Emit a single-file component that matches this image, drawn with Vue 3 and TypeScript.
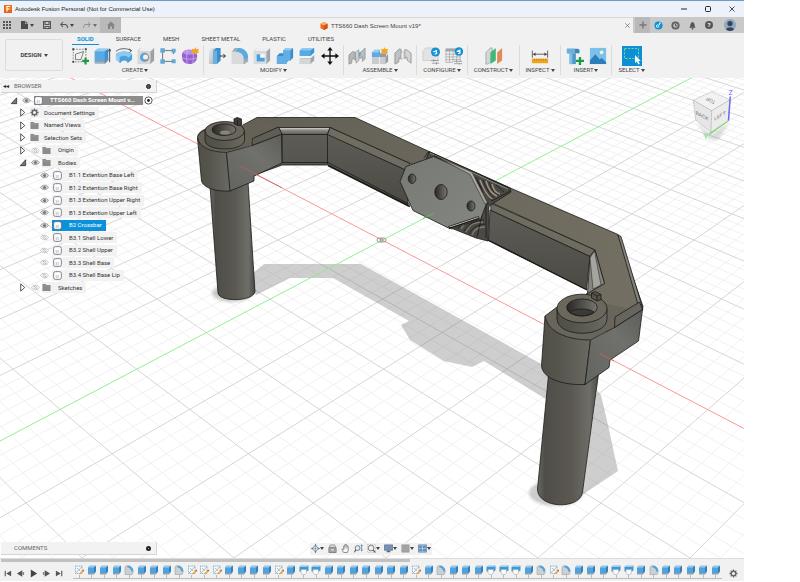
<script setup lang="ts">
import { ref } from 'vue'

interface ToolGroup {
  label: string
  width: number
  tools: { icon: string; name: string }[]
}

interface TreeNode {
  label: string
  level: number
  icon: 'gear' | 'folder' | 'body'
  eye?: 'on' | 'off'
  arrow?: 'open' | 'closed'
}

interface GridLine {
  x1: number
  y1: number
  x2: number
  y2: number
}

const tabs = ['SOLID', 'SURFACE', 'MESH', 'SHEET METAL', 'PLASTIC', 'UTILITIES']
const activeTab = ref('SOLID')

const tool = (icon: string, name: string) => ({ icon, name })

const groups: ToolGroup[] = [
  {
    label: 'CREATE',
    width: 137,
    tools: [
      tool('new-sketch', 'Create sketch'),
      tool('extrude', 'Extrude'),
      tool('revolve', 'Revolve'),
      tool('hole', 'Hole'),
      tool('pattern', 'Rectangular pattern'),
      tool('form', 'Create form'),
    ],
  },
  {
    label: 'MODIFY',
    width: 140,
    tools: [
      tool('press-pull', 'Press pull'),
      tool('fillet', 'Fillet'),
      tool('shell', 'Shell'),
      tool('combine', 'Combine'),
      tool('split', 'Split body'),
      tool('move', 'Move'),
    ],
  },
  {
    label: 'ASSEMBLE',
    width: 73,
    tools: [tool('joint', 'Joint'), tool('component', 'New component'), tool('as-built', 'As-built joint')],
  },
  { label: 'CONFIGURE', width: 51, tools: [tool('config', 'Configure'), tool('config-table', 'Configuration table')] },
  { label: 'CONSTRUCT', width: 52, tools: [tool('plane', 'Offset plane')] },
  { label: 'INSPECT', width: 41, tools: [tool('measure', 'Measure')] },
  { label: 'INSERT', width: 51, tools: [tool('insert', 'Insert fastener'), tool('canvas', 'Insert canvas')] },
  { label: 'SELECT', width: 39, tools: [tool('select', 'Select')] },
]

const nodes: TreeNode[] = [
  { label: 'Document Settings', level: 1, icon: 'gear', arrow: 'closed' },
  { label: 'Named Views', level: 1, icon: 'folder', arrow: 'closed' },
  { label: 'Selection Sets', level: 1, icon: 'folder', arrow: 'closed' },
  { label: 'Origin', level: 1, icon: 'folder', arrow: 'closed', eye: 'off' },
  { label: 'Bodies', level: 1, icon: 'folder', arrow: 'open', eye: 'on' },
  { label: 'B1.1 Extention Base Left', level: 2, icon: 'body', eye: 'on' },
  { label: 'B1.2 Extention Base Right', level: 2, icon: 'body', eye: 'on' },
  { label: 'B1.3 Extention Upper Right', level: 2, icon: 'body', eye: 'on' },
  { label: 'B1.3 Extention Upper Left', level: 2, icon: 'body', eye: 'on' },
  { label: 'B2 Crossbar', level: 2, icon: 'body', eye: 'on' },
  { label: 'B3.1 Shell Lower', level: 2, icon: 'body', eye: 'off' },
  { label: 'B3.2 Shell Upper', level: 2, icon: 'body', eye: 'off' },
  { label: 'B3.3 Shell Base', level: 2, icon: 'body', eye: 'off' },
  { label: 'B3.4 Shell Base Lip', level: 2, icon: 'body', eye: 'off' },
  { label: 'Sketches', level: 1, icon: 'folder', arrow: 'closed', eye: 'off' },
]
const selected = ref('B2 Crossbar')

/* Feature history: s = sketch, b = extrude, f = fillet, c = cut */
const featureIcons: Record<string, string> = { s: 'tl-sketch', b: 'tl-extrude', f: 'tl-fillet', c: 'tl-cut' }
const features = 'sbbbfbbbfsssbbbbsbccbbbbbbbsbfbbbcccbfsfbbbccbfbbbbb'.split('')

const navTools = [
  { icon: 'nav-orbit', name: 'Orbit', menu: true },
  { icon: 'nav-look', name: 'Look at', menu: false },
  { icon: 'nav-pan', name: 'Pan', menu: false },
  { icon: 'nav-zoom', name: 'Zoom', menu: false },
  { icon: 'nav-fit', name: 'Fit', menu: true },
  { icon: 'nav-display', name: 'Display settings', menu: true },
  { icon: 'nav-grid', name: 'Grid and snaps', menu: true },
  { icon: 'nav-views', name: 'Viewports', menu: true },
]

const playback = [
  { icon: 'pb-first', name: 'Go to start' },
  { icon: 'pb-prev', name: 'Step back' },
  { icon: 'pb-play', name: 'Play' },
  { icon: 'pb-next', name: 'Step forward' },
  { icon: 'pb-last', name: 'Go to end' },
]

/* Projects a point of the ground plane (u along red, v along green) to the view. */
function project(u: number, v: number): [number, number] {
  const d = u + v
  const e = u - v
  const w = 1 - 0.0395 * d
  return [(382 - 14.75 * d + 52 * e) / w, (240 + 17.7 * d) / w]
}

function gridLines(major: boolean): GridLine[] {
  const lines: GridLine[] = []
  const far = -18
  for (let i = -90; i <= 70; i++) {
    if ((i % 5 === 0) !== major || i === 0) continue
    const k = i / 5
    const near = Math.min(16, 20 - k)
    const [ax, ay] = project(k, far)
    const [bx, by] = project(k, near)
    const [cx, cy] = project(far, k)
    const [dx, dy] = project(near, k)
    lines.push({ x1: ax, y1: ay, x2: bx, y2: by }, { x1: cx, y1: cy, x2: dx, y2: dy })
  }
  return lines
}
const minorGrid = gridLines(false)
const majorGrid = gridLines(true)
</script>

<template>
  <svg class="sprite" aria-hidden="true">
    <defs>
      <linearGradient id="g-grey" x1="0" y1="0" x2="1" y2="1">
        <stop offset="0" stop-color="#ececec" /><stop offset="1" stop-color="#a9adb1" />
      </linearGradient>
    </defs>

    <symbol id="new-sketch" viewBox="0 0 20 20">
      <rect x="2.500" y="2.500" width="14" height="14" fill="none" stroke="#666" stroke-width=".8" stroke-dasharray="2 1.200" />
      <path d="M5 14V8M5 14h6l3-9M5 8l6-2 3-1" fill="none" stroke="#555" stroke-width=".8" />
      <path d="M1.500 1.500h2v2h-2zM15.500 1.500h2v2h-2zM1.500 15.500h2v2h-2z" fill="#444" />
      <path d="M12.500 15.500h7.500M16.200 12v7.500" stroke="#1d9d43" stroke-width="2.400" />
    </symbol>
    <symbol id="extrude" viewBox="0 0 20 20">
      <path d="M2 5 5 2h12v12l-3 4H2z" fill="#3c92d2" />
      <path d="M2 5h11v11H2z" fill="#5aaae1" /><path d="M2 5 5 2h12l-4 3z" fill="#8fcdf3" />
      <path d="M2 16h11v2.500H2z" fill="#aab0b5" />
      <path d="M13 16 17 12v3l-4 3.500z" fill="#888" />
      <path d="M18.500 17V3M17 5l1.500-3L20 5" fill="none" stroke="#333" stroke-width=".9" />
    </symbol>
    <symbol id="revolve" viewBox="0 0 20 20">
      <path d="M1 8c3-4 15-4 18 0v6l-5 4c0-4-7-4-8 0l-5-4z" fill="#4e9fda" />
      <path d="M1 8c3-4 15-4 18 0l-4 4c-2-3-8-3-10 0z" fill="#8cc9f0" />
      <path d="M5 12v6l-4-4V8z" fill="#9bd0f2" />
      <path d="M1 5c4-4 12-4 17-1M15.500 2 18.500 4 16 6" fill="none" stroke="#444" stroke-width=".9" />
    </symbol>
    <symbol id="hole" viewBox="0 0 20 20">
      <path d="M1 4 4 1h15v14l-4 4H1z" fill="#9da1a5" /><path d="M1 5h14v14H1z" fill="#d6d8da" />
      <path d="M1 5 4 1h15l-4 4z" fill="#efefef" />
      <circle cx="8.500" cy="11.500" r="5" fill="#8a8e92" /><path d="M8.500 6.500a5 5 0 0 0 0 10z" fill="#58a8df" /><circle cx="9.500" cy="11" r="2.800" fill="#eef2f5" />
    </symbol>
    <symbol id="pattern" viewBox="0 0 20 20">
      <path d="M4 4h12M4 4v12M4 16h12M16 5v3" stroke="#444" stroke-width=".8" fill="none" />
      <path d="M1.500 1.500h5v5h-5zM1.500 13.500h5v5h-5z" fill="#62a8d8" />
      <path d="M14 2h4.500v4.500H14zM14 13.500h4.500V18H14z" fill="#62a8d8" />
    </symbol>
    <symbol id="form" viewBox="0 0 20 20">
      <path d="M1 9c0-4 4-6 8-6s9 2 9 7-3 9-9 9-8-4-8-10z" fill="#9461cf" />
      <path d="M2 7c1-3 5-4 8-4s6 1 7 4c-3 2-12 2-15 0z" fill="#b992e6" />
      <path d="M1 12c5 2 12 2 17 0M7 3.500c-1 5-1 11 0 15.500M13 4c1 5 1 10 0 14.500" fill="none" stroke="#d3b8f2" stroke-width=".8" />
      <path d="m16 0 1 2.500L20 2l-1 2.500 1 2.500-3-.5L16 9l-1-2.500-3 .5 1-2.500L12 2l3 .5z" fill="#f5a51c" />
    </symbol>
    <symbol id="press-pull" viewBox="0 0 20 20">
      <path d="M1 4 4 1h6v14l-4 4H1z" fill="url(#g-grey)" />
      <path d="M6 4 9 1h5v14l-4 4H6z" fill="#3c8fce" /><path d="M6 4h4v15H6z" fill="#67b2e4" />
      <path d="M13 10h6M17 8l2.500 2L17 12" stroke="#222" fill="none" />
    </symbol>
    <symbol id="fillet" viewBox="0 0 20 20">
      <path d="M1 5 4 1h4c7 0 11 5 11 11v4l-4 3H1z" fill="#a7acb0" />
      <path d="M1 5h4c6 0 9 4 9 9v5H1z" fill="#d9dadb" />
      <path d="M8 1c7 0 11 5 11 11l-4 3C15 9 11 5 5 5z" fill="#58abe3" />
    </symbol>
    <symbol id="shell" viewBox="0 0 20 20">
      <path d="M1 5 4 1h15v14l-4 4H1z" fill="#a2a6aa" /><path d="M1 5h14v14H1z" fill="#dadcdd" />
      <path d="M1 5 4 1h15l-4 4z" fill="#efefef" /><path d="M4 8h9v8H4z" fill="#f6f9fb" />
      <path d="M4 8h4v4h5v4H4z" fill="#4aa0dc" />
    </symbol>
    <symbol id="combine" viewBox="0 0 20 20">
      <path d="M1 10 4 7h4V4l3-3h8v11l-3 3h-3v1l-3 3H1z" fill="#3b8ccb" />
      <path d="M1 10h7V4h8v11h-4v4H1z" fill="#63afe3" />
      <path d="m8 4 3-3h8l-3 3z" fill="#93cdf2" />
    </symbol>
    <symbol id="split" viewBox="0 0 20 20">
      <path d="M2 4 5 1h13v5l-4 4H2z" fill="#3d93d3" /><path d="M2 4h12v6H2z" fill="#58aae2" /><path d="M2 4 5 1h13l-4 3z" fill="#8ecaf1" />
      <path d="M2 13l3-2h9l4-3v7l-4 4H2z" fill="#a2a6aa" /><path d="M2 13h12v6H2z" fill="#d4d6d8" />
      <path d="m1 12.500 3-2h10l5-4v1.500l-5 4.500z" fill="#f4f6f7" />
    </symbol>
    <symbol id="move" viewBox="0 0 20 20">
      <path d="M10 3v14M3 10h14" stroke="#111" stroke-width="1.500" />
      <path d="m10 0 3 4H7zM10 20l3-4H7zM0 10l4-3v6zM20 10l-4-3v6z" fill="#111" />
    </symbol>
    <symbol id="joint" viewBox="0 0 20 20">
      <path d="m1 9 4-4 3 1v9l-3-3-1 6-3 1z" fill="#b5b8bb" stroke="#777" stroke-width=".6" />
      <path d="m8 6 4-3v12l-3 3z" fill="#cfd1d3" stroke="#777" stroke-width=".6" />
      <path d="m13 7 6-6v12l-3 3v-5l-3 2z" fill="#babdc0" stroke="#777" stroke-width=".6" />
      <path d="M12 6.500 14 5v4l-2 1.500z" fill="#54a5dd" />
    </symbol>
    <symbol id="component" viewBox="0 0 20 20">
      <path d="M1 6 4 3h6v8H1z" fill="#5cabe2" /><path d="M1 6 4 3h6l-2 3z" fill="#9ad2f4" />
      <path d="M1 11h8v8H1zM10 11h6v8h-6z" fill="#c9cbcd" /><path d="M10 7h8l-2 4h-6zM16 11l3-3v8l-3 3z" fill="#989ca0" />
      <path d="m15 0 1 2.500L19 2l-1 2.500 1 2.500-3-.5L15 9l-1-2.500-3 .5 1-2.500L11 2l3 .5z" fill="#f5a51c" />
    </symbol>
    <symbol id="as-built" viewBox="0 0 20 20">
      <path d="m1 7 5-5 2 1v10l-2-1-1 5-4 2z" fill="#bfc2c4" stroke="#777" stroke-width=".7" />
      <path d="m12 3 2 0 5 4v11l-4-3-1-4-2 2z" fill="#d3d5d7" stroke="#777" stroke-width=".7" />
      <path d="m8 7 3-2v7l-3 2z" fill="#eef0f1" stroke="#9ca0a3" stroke-width=".5" />
    </symbol>
    <symbol id="config" viewBox="0 0 20 20">
      <path d="M1 5 4 1h8v6h6v8H1z" fill="#e2e3e4" stroke="#c0c2c4" stroke-width=".7" />
      <circle cx="15" cy="5.500" r="5" fill="#1291d6" />
      <path d="M12.500 5.500 16 4v3M14 8l3-1" stroke="#fff" stroke-width="1.200" fill="none" />
      <path d="M10 15h9M11 18h8M13 13.500v3M16 16.500v3" stroke="#8a9299" stroke-width=".9" />
    </symbol>
    <symbol id="config-table" viewBox="0 0 20 20">
      <path d="M1 2h16v15H1z" fill="#f0f0f0" stroke="#a1a4a7" stroke-width=".8" />
      <path d="M1 2h12v3H1z" fill="#a1a4a7" /><path d="M1 8h16M1 11h16M1 14h16M5 5v12M9 5v12M13 5v12" stroke="#a1a4a7" stroke-width=".8" />
      <circle cx="15.500" cy="5" r="4.800" fill="#1291d6" />
      <path d="M13 5 16.500 3.500v3M14.500 7.500l3-1" stroke="#fff" stroke-width="1.200" fill="none" />
      <path d="M9 16h10v4H9z" fill="#f0f0f0" /><path d="M10 16h9M10 18.500h9M13 15v2.500M16 17.500v2" stroke="#8a9299" stroke-width=".8" />
    </symbol>
    <symbol id="plane" viewBox="0 0 20 20">
      <path d="m1 6 5-5h2v14l-5 4H1z" fill="#d3d6d8" stroke="#85898c" stroke-width=".6" />
      <path d="m6 6 6-5v14l-6 4z" fill="#42b878" /><path d="m13.500 6 5.500-5v14l-5.500 4z" fill="#e08b57" />
    </symbol>
    <symbol id="measure" viewBox="0 0 20 20">
      <path d="M1.500 4v8M18.500 4v8M3 8h14" stroke="#444" stroke-width=".9" />
      <path d="m2 8 3-2v4zM18 8l-3-2v4z" fill="#444" />
      <path d="M1 13h18v5H1z" fill="#f0a31c" /><path d="M4 13v2M6.500 13v2M9 13v2M11.500 13v2M14 13v2M16.500 13v2" stroke="#a36b08" stroke-width=".6" />
    </symbol>
    <symbol id="insert" viewBox="0 0 20 20">
      <path d="M1 2h12l2 1v4H1z" fill="#3d87b8" /><path d="M1 2h9v5H1z" fill="#6bb0da" />
      <path d="M4 7h7v12H4z" fill="#4d99ca" /><path d="M4 7h3v12H4z" fill="#83bfe2" />
      <path d="M11 15.500h9M15.500 11v9" stroke="#1d9d43" stroke-width="2.600" />
    </symbol>
    <symbol id="canvas" viewBox="0 0 20 20">
      <path d="M1 1h18v18H1z" fill="#7cc0ec" /><path d="m1 15 6-7 5 6 2-2 5 5v2H1z" fill="#2d7fba" />
      <circle cx="14" cy="6" r="2" fill="#fff6c9" />
    </symbol>
    <symbol id="select" viewBox="0 0 20 20">
      <path d="M0 0h20v20H0z" fill="#0b90d8" />
      <path d="M2.500 2.500h14v10h-14z" fill="none" stroke="#7fdc86" stroke-width=".9" stroke-dasharray="2.200 1.300" />
      <path d="M13 9v8l2-1.500 1.200 3 1.500-.7-1.200-2.800h2.300z" fill="#fff" />
    </symbol>

    <symbol id="tl-sketch" viewBox="0 0 10 10">
      <path d="M1.500 1h6.500v7.500H1.500z" fill="#f5f7f8" stroke="#75a5c0" stroke-width=".8" stroke-dasharray="1.200 .6" />
      <path d="M2 8 8 1.500M3 3l3 3" stroke="#7c9cad" stroke-width=".6" />
      <path d="m9.500 5.500-4 3.500" stroke="#f0a130" stroke-width="1.500" /><path d="m9.800 5-1 1" stroke="#d4453a" stroke-width="1.500" />
    </symbol>
    <symbol id="tl-extrude" viewBox="0 0 10 10">
      <path d="M1 2.500 2.500.700H9V7L7 9.500H1z" fill="#9a9fa4" /><path d="M1 2.500h6V8.200H1z" fill="#4ea3df" />
      <path d="M1 2.500 2.500.700H9L7 2.500z" fill="#8accf3" /><path d="M7 2.500 9 .700v5L7 8.200z" fill="#2e7fbf" />
    </symbol>
    <symbol id="tl-fillet" viewBox="0 0 10 10">
      <path d="M1 2.200 2 .800h2c3 0 5 2.500 5 5v2.200L8 9.500H1z" fill="#cdd0d2" stroke="#8d9195" stroke-width=".5" />
      <path d="M4 .800c3 0 5.300 2.500 5.300 5.500L7.500 6.800C7 4 5.500 2.600 3 2.300z" fill="#4ba3df" />
    </symbol>
    <symbol id="tl-cut" viewBox="0 0 10 10">
      <path d="M.5 2 2 .8h7.500v4.500L8 6.500H.5z" fill="#3f97d6" /><path d="M.5 2 2 .8h7.500L8 2z" fill="#8fd0f5" />
      <path d="M2 4.500h5.500v3L6 9.600H3.500L2 7.500z" fill="#fafafa" stroke="#a3a9ad" stroke-width=".6" />
    </symbol>

    <symbol id="pb-first" viewBox="0 0 10 10"><path d="M2.500 2v6" stroke="#555" stroke-width="1.200" /><path d="M9 2v6L3.500 5z" fill="#555" /></symbol>
    <symbol id="pb-prev" viewBox="0 0 10 10"><path d="M7 1.500v7L1 5z" fill="#555" /><path d="M7.500 3.500H9v3H7.500z" fill="#777" /></symbol>
    <symbol id="pb-play" viewBox="0 0 10 10"><path d="M2 .5v9L9 5z" fill="#444" /></symbol>
    <symbol id="pb-next" viewBox="0 0 10 10"><path d="M3 1.500v7L9 5z" fill="#555" /><path d="M1 3.500h1.500v3H1z" fill="#777" /></symbol>
    <symbol id="pb-last" viewBox="0 0 10 10"><path d="M7.500 2v6" stroke="#555" stroke-width="1.200" /><path d="M1 2v6l5.500-3z" fill="#555" /></symbol>

    <symbol id="nav-orbit" viewBox="0 0 10 10">
      <path d="M5 0v10M.500 5h9" stroke="#777" stroke-width=".8" /><circle cx="5" cy="5" r="2.600" fill="#d9e9f4" stroke="#6f7f8b" stroke-width=".7" />
      <path d="m5 0 1.400 2H3.600zM5 10l1.400-2H3.600zM0 5l2-1.400v2.800zM10 5 8 3.600v2.800z" fill="#777" /><circle cx="5" cy="5" r="1" fill="#3e97cf" />
    </symbol>
    <symbol id="nav-look" viewBox="0 0 10 10">
      <path d="M1 4h8v5.500H1z" fill="#aeb1b4" stroke="#666" stroke-width=".8" /><path d="m1.500 4 1-3h5l1 3z" fill="#d6d8da" stroke="#777" stroke-width=".7" />
      <path d="M3 5.500v2.200h4V5.500z" fill="#f0f0f0" stroke="#666" stroke-width=".5" />
    </symbol>
    <symbol id="nav-pan" viewBox="0 0 10 10">
      <path d="M3 9.500 1 6l1-.7 1 1V2.200h1V1h1V.6h1v1h1v1.200h1V7L7 9.500z" fill="#f6f6f6" stroke="#555" stroke-width=".7" />
      <path d="M4 2v3M5.300 1.500V5M6.500 2v3" stroke="#777" stroke-width=".5" />
    </symbol>
    <symbol id="nav-zoom" viewBox="0 0 10 10">
      <circle cx="4" cy="4.500" r="2.700" fill="#e3edf4" stroke="#666" stroke-width=".9" /><path d="m2 6.500-1.500 2.700" stroke="#555" stroke-width="1.200" />
      <path d="M8.500 1v7M7.500 2.200 8.500.8l1 1.400M7.500 6.800h2" stroke="#3f75a3" stroke-width=".8" fill="none" />
    </symbol>
    <symbol id="nav-fit" viewBox="0 0 10 10">
      <path d="M.500.500h9v9h-9z" fill="none" stroke="#999" stroke-width=".5" stroke-dasharray="1.500 1" />
      <circle cx="4.500" cy="4.500" r="3.200" fill="#e9f2ec" stroke="#666" stroke-width=".9" /><path d="M6.700 6.700 9.300 9.300" stroke="#555" stroke-width="1.300" />
    </symbol>
    <symbol id="nav-display" viewBox="0 0 10 10">
      <path d="M.500 1h9v6h-9z" fill="#6e95c0" stroke="#6a7077" stroke-width=".8" /><path d="M3 8.500h4M5 7v2" stroke="#666" stroke-width="1.200" />
    </symbol>
    <symbol id="nav-grid" viewBox="0 0 10 10">
      <path d="M.500.500h9v9h-9z" fill="#9b9ea1" /><path d="M.500 3.500h9M.500 6.500h9M3.500.500v9M6.500.500v9" stroke="#b0b3b6" stroke-width=".5" />
    </symbol>
    <symbol id="nav-views" viewBox="0 0 10 10">
      <path d="M.500 1h9v8h-9z" fill="#dce7f1" stroke="#4e6f91" stroke-width=".8" /><path d="M1.200 1.700h3.500v3H1.200zM5.300 1.700h3.500v3H5.300zM1.200 5.300h3.500v3H1.200zM5.300 5.300h3.500v3H5.300z" fill="#5f8fbd" />
    </symbol>

    <symbol id="eye-on" viewBox="0 0 10 10">
      <path d="M.700 5c2-3.300 6.600-3.300 8.600 0-2 3.300-6.600 3.300-8.600 0z" fill="#ddd" stroke="#888" stroke-width=".9" /><circle cx="5" cy="5" r="1.700" fill="#777" />
    </symbol>
    <symbol id="eye-off" viewBox="0 0 10 10">
      <path d="M.700 5c2-3.300 6.600-3.300 8.600 0-2 3.300-6.600 3.300-8.600 0z" fill="#fff" stroke="#b3b3b3" stroke-width=".8" /><circle cx="5" cy="5" r="1.600" fill="none" stroke="#b3b3b3" stroke-width=".7" /><path d="m2 2 6 6" stroke="#b3b3b3" stroke-width=".7" />
    </symbol>
    <symbol id="folder" viewBox="0 0 10 10"><path d="M.500 1h3.500l1 1.200h4.500V9h-9z" fill="#8b8b8b" /><path d="M.500 3.300h9" stroke="#aaa" stroke-width=".5" /></symbol>
    <symbol id="body" viewBox="0 0 10 10">
      <rect x=".7" y=".7" width="8.600" height="8.600" rx="2" fill="#fdfdfd" stroke="#6b6b78" stroke-width=".9" /><path d="M3 4.500h1.500V8H3zM5 4.500h1.500V8H5z" fill="#cfd2d8" />
    </symbol>
    <symbol id="gear" viewBox="0 0 10 10">
      <circle cx="5" cy="5" r="2.500" fill="none" stroke="#666" stroke-width="1.500" />
      <path d="M5 .5v2M5 7.500v2M.500 5h2M7.500 5h2M1.800 1.800l1.400 1.400M6.800 6.800l1.400 1.400M8.200 1.800 6.800 3.200M3.200 6.800 1.800 8.200" stroke="#666" stroke-width="1.400" />
    </symbol>
    <symbol id="closed" viewBox="0 0 10 10"><path d="M3 1v8l4.500-4z" fill="#fff" stroke="#333" stroke-width=".9" /></symbol>
    <symbol id="open" viewBox="0 0 10 10"><path d="M8.500 2v6.500h-6z" fill="#777" stroke="#333" stroke-width=".9" /></symbol>
  </svg>

  <div class="app">
    <header class="titlebar">
      <svg class="logo" viewBox="0 0 8 8"><path d="M0 0h8v8H0z" fill="#e8650d" /><path d="M1 0h7v5H1z" fill="#f4761b" /><path d="M3 6.500v-5h3M3 4h2.500" fill="none" stroke="#fff" stroke-width="1.200" /></svg>
      <h1>Autodesk Fusion Personal (Not for Commercial Use)</h1>
      <div class="window-controls">
        <button aria-label="Minimize"><svg viewBox="0 0 8 8"><path d="M1 4h6" stroke="#222" /></svg></button>
        <button aria-label="Maximize"><svg viewBox="0 0 8 8"><rect x="1.500" y="1.500" width="5" height="5" rx="1" fill="none" stroke="#222" /></svg></button>
        <button aria-label="Close"><svg viewBox="0 0 8 8"><path d="m1.500 1.500 5 5M6.500 1.500l-5 5" stroke="#222" stroke-width=".8" /></svg></button>
      </div>
    </header>

    <div class="docbar">
      <div class="quick">
        <button aria-label="Data panel"><svg viewBox="0 0 8 8"><path d="M0 0h2v2H0zM3 0h2v2H3zM6 0h2v2H6zM0 3h2v2H0zM3 3h2v2H3zM6 3h2v2H6zM0 6h2v2H0zM3 6h2v2H3zM6 6h2v2H6z" fill="#555" /></svg></button>
        <button aria-label="File"><svg viewBox="0 0 8 8"><path d="M1 0h4v3h3v5H1z" fill="#4c4c4c" /><path d="m5.500 0 2.500 2.500H5.500z" fill="#4c4c4c" /></svg><i class="caret"></i></button>
        <button aria-label="Save"><svg viewBox="0 0 8 8"><path d="M.500.500h7v7h-7zM2 .500v3h4v-3M2 7.500v-2h4v2" fill="none" stroke="#555" stroke-width="1.100" /></svg></button>
        <button aria-label="Undo"><svg viewBox="0 0 8 8"><path d="M1 3.500h4c2 0 2.500 1.500 2.500 3.500M3 1 .800 3.500 3 6" fill="none" stroke="#555" stroke-width="1.100" /></svg><i class="caret"></i></button>
        <button aria-label="Redo" class="dim"><svg viewBox="0 0 8 8"><path d="M7 3.500H3C1 3.500.500 5 .500 7M5 1l2.200 2.500L5 6" fill="none" stroke="#777" stroke-width="1" /></svg><i class="caret"></i></button>
      </div>
      <button class="home" aria-label="Home"><svg viewBox="0 0 8 8"><path d="M4 .500 8 4.200H7V8H5V5.500H3V8H1V4.200H0z" fill="#858585" /></svg></button>
      <div class="doc-tab">
        <svg class="doc-icon" viewBox="0 0 8 8"><path d="m4 0 3.500 1.700v4.500L4 8 .500 6.200V1.700z" fill="#ed6a1c" /><path d="m4 0 3.500 1.700L4 3.500.500 1.700z" fill="#ffad6d" /><path d="M4 3.500 7.500 1.700v4.500L4 8z" fill="#cf4f0b" /></svg>
        <span>TTS660 Dash Screen Mount v19*</span>
        <button class="tab-close" aria-label="Close document"><svg viewBox="0 0 8 8"><path d="m1.500 1.500 5 5M6.500 1.500l-5 5" stroke="#777" stroke-width=".9" /></svg></button>
      </div>
      <button class="new-tab" aria-label="New document"><svg viewBox="0 0 8 8"><path d="M4 .500v7M.500 4h7" stroke="#777" stroke-width="1.400" /></svg></button>
      <div class="account">
        <button aria-label="Extensions"><svg viewBox="0 0 10 10"><circle cx="5" cy="5" r="4.500" fill="#0f8fd4" /><circle cx="4" cy="5.700" r="1.400" fill="none" stroke="#fff" /><path d="M6 4.500V2.300h1.800" fill="none" stroke="#fff" /></svg></button>
        <button aria-label="Job status"><svg viewBox="0 0 10 10"><circle cx="5" cy="5" r="4.500" fill="#5f5f5f" /><circle cx="5" cy="5" r="2.600" fill="#bbb" /><path d="M5 3v2.300h2" fill="none" stroke="#444" stroke-width=".9" /></svg></button>
        <button aria-label="Notifications"><svg viewBox="0 0 10 10"><path d="M1.500 7.500C3 6.500 2 2 5 1.200 8 2 7 6.500 8.500 7.500z" fill="#555" /><circle cx="5" cy="8.500" r="1" fill="#555" /></svg></button>
        <button aria-label="Help" class="help">?</button>
        <button aria-label="Account" class="avatar"><svg viewBox="0 0 12 12"><circle cx="6" cy="6" r="6" fill="#93a7bf" /><circle cx="6" cy="4.500" r="2.600" fill="#35455c" /><path d="M2 10.500c1-3 7-3 8 0A6 6 0 0 1 2 10.500z" fill="#35455c" /></svg></button>
      </div>
    </div>

    <div class="ribbon">
      <button class="workspace">DESIGN <i class="caret"></i></button>
      <div class="ribbon-main">
        <nav class="tabs">
          <button v-for="t in tabs" :key="t" :class="{ active: t === activeTab }" @click="activeTab = t">{{ t }}</button>
        </nav>
        <div class="groups">
          <section v-for="g in groups" :key="g.label" class="group" :style="{ width: g.width + 'px' }">
            <div class="tools">
              <button v-for="i in g.tools" :key="i.icon" :aria-label="i.name"><svg :class="{ big: i.icon === 'select' }"><use :href="'#' + i.icon" /></svg></button>
            </div>
            <button class="group-label">{{ g.label }} <i class="caret"></i></button>
          </section>
        </div>
      </div>
    </div>

    <main class="viewport">
      <svg class="scene" viewBox="0 78 744 480" preserveAspectRatio="xMidYMid slice" role="img" aria-label="Dash screen mount model">
        <defs>
          <linearGradient id="m-cyl"><stop offset="0" stop-color="#6a6862" /><stop offset=".12" stop-color="#4f4d47" /><stop offset=".55" stop-color="#5a5851" /><stop offset=".85" stop-color="#6e6e68" /><stop offset="1" stop-color="#4a4943" /></linearGradient>
          <linearGradient id="m-drum"><stop offset="0" stop-color="#504f48" /><stop offset=".3" stop-color="#54534c" /><stop offset="1" stop-color="#6a6a63" /></linearGradient>
          <linearGradient id="m-side" x1="0" y1="1" x2="1" y2="0"><stop offset="0" stop-color="#62645f" /><stop offset=".6" stop-color="#70716c" /><stop offset="1" stop-color="#5d5e59" /></linearGradient>
          <linearGradient id="m-top"><stop offset="0" stop-color="#625f55" /><stop offset="1" stop-color="#746f63" /></linearGradient>
          <linearGradient id="m-wall" x1="0" y1="0" x2="0" y2="1"><stop offset="0" stop-color="#5d5c56" /><stop offset="1" stop-color="#4b4a43" /></linearGradient>
          <linearGradient id="m-lip" x1="0" y1="0" x2="0" y2="1"><stop offset="0" stop-color="#dededa" /><stop offset=".4" stop-color="#8a8983" /><stop offset="1" stop-color="#5c5a53" /></linearGradient>
          <linearGradient id="m-plate" x1="0" y1="0" x2="1" y2="1"><stop offset="0" stop-color="#767974" /><stop offset="1" stop-color="#838681" /></linearGradient>
          <linearGradient id="m-hole"><stop offset="0" stop-color="#282724" /><stop offset="1" stop-color="#77766f" /></linearGradient>
          <filter id="soft"><feGaussianBlur stdDeviation="1.500" /></filter>
        </defs>
        <rect y="0" width="744" height="700" fill="#fff" />
        <g stroke="#ededed" stroke-width=".8"><line v-for="(l, i) in minorGrid" :key="i" v-bind="l" /></g>
        <g stroke="#d6d6d6" stroke-width="1"><line v-for="(l, i) in majorGrid" :key="i" v-bind="l" /></g>

        <g fill="#777" fill-opacity=".36">
          <path d="m248 277 16-13h97l49 27 144 80v32l-10-5-60-37-12 6-28-6-34-21-9-15 8-4-76-43h-43l-34 17z" />
          <path d="m597 391 4 4 7 30 10 46-36 24z" />
        </g>
        <g fill="#999" fill-opacity=".5" filter="url(#soft)"><ellipse cx="232" cy="293" rx="20" ry="9" /><ellipse cx="556" cy="493" rx="27" ry="13" /></g>

        <line x1="69" y1="77" x2="744" y2="428.500" stroke="#f98b8b" stroke-width=".9" />
        <line x1="0" y1="441" x2="693" y2="77" stroke="#86ee86" stroke-width=".9" />

        <g stroke="#1c1b19" stroke-width=".8" stroke-linejoin="round">
          <!-- left leg -->
          <path d="M210 186 218 293c1 9 34 9 37-1l-7-110z" fill="url(#m-cyl)" />
          <!-- crossbar top -->
          <path d="M242 125.500 257 117.500H355L429 151.500 509 187.500 618 234.500 643 306.500 640 316.500 612 332.500 575 325 587 293 604.500 283.500 595 250 492 203 410 163.500 330 127.500H278L252 139z" fill="url(#m-top)" />
          <path d="M282 134h46l80 37v35l-80-41h-46l-30 11z" fill="url(#m-wall)" />
          <path d="M282 162.500h46l82 42" fill="none" />
          <path d="M327.500 134v30M282 134v29" fill="none" />
          <path d="M278.500 127.500H330l-2.500 7H282z" fill="url(#m-lip)" />
          <path d="m330 127.500 80 36-2 7.500-80.500-36.500z" fill="#6f6c62" />
          <path d="m328 165.500 82 41" stroke-width="1.600" fill="none" />
          <!-- left mounting block -->
          <path d="M197.500 138c-1-5 5-9 12-11l34-2 13-6 22 8-26 12v6l-25 7.500c-16 0-30-5-30-14.500z" fill="#656157" stroke="none" />
          <path d="M197.500 138c0-3 3-6 8-8.500" fill="none" />
          <path d="M197.500 138c2 9 12 14 29 14.500l4 38.500c-14 1-27-3-29-10z" fill="url(#m-drum)" />
          <path d="m226.500 152.500 25.500-7 29.500-11.500.5 29-28 13v5l-24 10z" fill="url(#m-side)" />
          <path d="m252 145.500.5-7 26-11.500 3.500 7z" fill="#5f5e56" />
          <path d="M205 131v9c0 12 39 12 39.500 0v-9z" fill="url(#m-drum)" />
          <ellipse cx="224.700" cy="131" rx="19.700" ry="9.500" fill="#6a665c" />
          <ellipse cx="224" cy="129.700" rx="12" ry="5.800" fill="url(#m-hole)" />
          <ellipse cx="225" cy="132.500" rx="5" ry="2" fill="#85847c" stroke="none" />
          <path d="m234 119 3-1.500 4.500 1.500v6l-4 .5-3.500-2z" fill="#3d3c37" /><path d="M237.500 120v5" />

          <!-- crossbar, right half -->
          <path d="m490.500 203 104.500 47-5 6.500-99-46z" fill="#6e6b60" />
          <path d="m490 210 100 46.500-3.500 33-98-49z" fill="url(#m-wall)" />
          <path d="m488 240 99 50" stroke-width="1.400" />
          <path d="m595 250 9.500 33.500-17 10 2.500-37.500z" fill="#85857f" />
          <path d="m594.500 251 6.500 34-8 4-3-31z" fill="#a5a5a0" stroke-width=".5" />
          <path d="m618 235 3 1.500 22 73-4-1.500z" fill="#84837b" />
          <!-- centre joint -->
          <path d="m429 151.500 81 36.500 1 4-22 14-1 35-12-3-30-12-40-50 8-10 11-3z" fill="#4a4943" />
          <path d="m424 158 4-6 43 20 38 16M470 172l22 29 18-10M466 176l20 28v34M484 205l5-2" fill="none" />
          <path d="m430 153 78 36" stroke="#8c8a81" fill="none" stroke-width="1" />
          <path d="M480 180c3 8 6 15 12 19M486 181c2 7 5 13 11 15M492 184c1 5 3 9 8 10" fill="none" stroke="#9c9285" stroke-width="1.500" />
          <path d="M483 180c3 8 6 14 11 17M489 182c2 6 4 11 10 13M476 177l7 16M496 185l8 7" fill="none" />
          <path d="M461 229c5-9 12-12 20-12M466 232c4-8 9-10 17-10M472 235c2-6 6-8 13-8" fill="none" stroke="#7d7b73" stroke-width="1.300" />
          <path d="M458 229c6-9 13-12 22-13M464 231c5-8 11-10 20-11M469 234c4-7 8-9 16-10M477 237l5-22" fill="none" />
          <path d="m433.500 156.500 38.500 17 14.500 30-6 16-32 8.500-35.500-17.500L400 181.500l6-15z" fill="url(#m-plate)" />
          <path d="m434 155.500 38 16.500 15.500 31-2.500 1-15-29.500z" fill="#a7a79f" stroke-width=".5" />
          <path d="m448.500 226.500 30-10 1 3-28 9.500z" fill="#c2c3be" /><path d="m449 228.500 30-10" stroke-width="1.400" />
          <ellipse cx="412" cy="178.700" rx="3.800" ry="4.700" fill="url(#m-hole)" />
          <ellipse cx="441" cy="192" rx="6.200" ry="7.500" fill="url(#m-hole)" />
          <ellipse cx="471" cy="206" rx="4" ry="5" fill="url(#m-hole)" />

          <!-- right leg -->
          <path d="m549 370-11.500 119c0 20 43 21 45 3L599 370z" fill="url(#m-cyl)" />
          <!-- right mounting block -->
          <path d="m545 316 12-9 30-7 40 8-12 19-24.500 13c-20 1-45-6-45.500-24z" fill="#69655b" stroke="none" />
          <path d="m545 316 12-9" />
          <path d="M545 316c3 17 24 24 45.500 24L585 384.500c-22 1-43-6-43.500-19z" fill="url(#m-drum)" />
          <path d="m590.500 340 24-12.500L642.500 309.500 638.500 341 610 360l-1 7.500-24 17z" fill="url(#m-side)" />
          <path d="m614.500 327.500.5-10.500 24.500-15 3 7.500z" fill="#67655d" />
          <path d="M557 309v10c1 19 49 19 50 0v-10z" fill="url(#m-drum)" />
          <ellipse cx="582" cy="308.500" rx="25" ry="14.300" fill="#6b675d" />
          <ellipse cx="582" cy="307.500" rx="15.300" ry="8.600" fill="url(#m-hole)" />
          <path d="M570 312c5-4 19-4 24 0-5 5-19 5-24 0z" fill="#3b3a35" />
          <path d="m591.500 293 4-1.500 5.500 3v5l-4 1.500-5.500-3z" fill="#55534c" /><path d="m591.500 293 5.500 3v5M597 296l4-1.500" fill="none" />
        </g>
        <line x1="240" y1="166" x2="282" y2="187.800" stroke="#c95c56" stroke-width=".8" />
        <line x1="600" y1="353.500" x2="614" y2="361" stroke="#c95c56" stroke-width=".9" />
        <line x1="423" y1="218.500" x2="433.500" y2="213.300" stroke="#5fc05f" stroke-width=".9" />
        <g fill="none" stroke="#8c8c8c" stroke-width=".9"><rect x="377" y="238" width="9" height="4" rx="2" /><circle cx="381.500" cy="240" r="1.400" /></g>

        <!-- view cube -->
        <path d="m696 122 15 12 19-12-12 18-10-1z" fill="#999" opacity=".35" filter="url(#soft)" />
        <line x1="728.500" y1="120.500" x2="709" y2="134.500" stroke="#63e663" stroke-width="1.500" />
        <g stroke="#aaa" stroke-width=".6" stroke-dasharray="2 .6">
          <path d="m711.700 91.500 18.300 8.300-18.300 11-18.400-10.500z" fill="#f2f2f2" />
          <path d="m693.300 100.300 18.400 10.500-.7 21.200-15.300-12z" fill="#e6e6e6" />
          <path d="m730 99.800-18.300 11-.7 21.200 17.300-11.500z" fill="#ececec" />
        </g>
        <line x1="728.500" y1="120.500" x2="730.300" y2="96.500" stroke="#6a6aee" stroke-width="1.500" />
        <g class="cube-text">
          <text transform="translate(702 117.500) skewY(27)">BACK</text>
          <text transform="translate(720 117.500) skewY(-30)">LEFT</text>
          <text transform="translate(711.500 99) rotate(205)">TOP</text>
          <text class="z-axis" x="730.500" y="95">Z</text>
          <text class="y-axis" x="705.500" y="138.500">Y</text>
        </g>
      </svg>

      <aside class="browser">
        <div class="panel-head"><span class="collapse">◂◂</span><h2>BROWSER</h2><button class="dot" aria-label="Panel options"></button></div>
        <ul class="tree">
          <li class="row root">
            <svg class="ico"><use href="#open" /></svg>
            <svg class="ico eye"><use href="#eye-on" /></svg>
            <span class="root-label"><svg class="ico"><use href="#body" /></svg><b>TTS660 Dash Screen Mount v...</b></span>
            <svg class="ico target" viewBox="0 0 10 10"><circle cx="5" cy="5" r="4" fill="#fff" stroke="#333" stroke-width=".9" /><circle cx="5" cy="5" r="1.600" fill="#222" /></svg>
          </li>
          <li
            v-for="n in nodes"
            :key="n.label"
            class="row"
            :class="['level-' + n.level, { picked: n.label === selected }]"
            @click="selected = n.label"
          >
            <svg v-if="n.arrow" class="ico"><use :href="'#' + n.arrow" /></svg>
            <svg v-if="n.eye" class="ico eye"><use :href="'#eye-' + n.eye" /></svg>
            <span class="node"><svg class="ico"><use :href="'#' + n.icon" /></svg><span>{{ n.label }}</span></span>
          </li>
        </ul>
      </aside>

      <div class="bottom">
        <div class="panel-head comments"><h2>COMMENTS</h2><button class="dot plus" aria-label="Add comment"></button></div>
        <div class="navbar">
          <button v-for="n in navTools" :key="n.icon" :aria-label="n.name"><svg><use :href="'#' + n.icon" /></svg><i v-if="n.menu" class="caret"></i></button>
        </div>
      </div>
    </main>

    <footer class="timeline">
      <div class="scroll"><div class="thumb"></div></div>
      <div class="track">
        <div class="playback">
          <button v-for="p in playback" :key="p.icon" :aria-label="p.name"><svg><use :href="'#' + p.icon" /></svg></button>
        </div>
        <ol class="features">
          <li v-for="(f, i) in features" :key="i"><svg><use :href="'#' + featureIcons[f]" /></svg></li>
        </ol>
        <button class="settings" aria-label="Timeline settings"><svg><use href="#gear" /></svg></button>
      </div>
    </footer>
  </div>
</template>

<style>
body {
  margin: 0;
  background: #fff;
}
</style>

<style scoped>
* {
  box-sizing: border-box;
}
.sprite {
  position: absolute;
  width: 0;
  height: 0;
}
.app {
  display: flex;
  flex-direction: column;
  width: 93%;
  height: 100vh;
  padding-bottom: 1px;
  font: 6px/8px Roboto, 'Liberation Sans', sans-serif;
  color: #444;
}
button {
  display: flex;
  align-items: center;
  justify-content: center;
  padding: 0;
  border: 0;
  background: none;
  font: inherit;
  color: inherit;
}
h1,
h2,
ul,
ol {
  margin: 0;
  padding: 0;
  font: inherit;
  list-style: none;
}
svg {
  display: block;
  flex: none;
}
.caret {
  flex: none;
  width: 0;
  height: 0;
  margin-left: 2px;
  border: 2px solid transparent;
  border-top: 3px solid #444;
  border-bottom: 0;
}

.titlebar {
  display: flex;
  flex: none;
  align-items: center;
  height: 17px;
  padding-left: 4px;
  border-top: 1px solid #6f9cc4;
  background: #edf2fa;
}
.logo {
  width: 8px;
  height: 8px;
}
.titlebar h1 {
  flex: 1;
  margin-left: 3px;
  font-family: 'Liberation Sans', sans-serif;
  color: #222;
}
.window-controls {
  display: flex;
  gap: 16px;
  padding-right: 8px;
}
.window-controls svg {
  width: 8px;
  height: 8px;
}

.docbar {
  display: flex;
  flex: none;
  height: 16px;
  background: #c9c9c9;
}
.quick {
  display: flex;
  align-items: center;
  width: 100px;
  padding-left: 3px;
  gap: 9px;
}
.quick svg {
  width: 8px;
  height: 8px;
}
.quick .dim {
  opacity: 0.7;
}
.home {
  width: 21px;
  background: #b9b9b9;
}
.home svg {
  width: 8px;
  height: 8px;
}
.doc-tab {
  display: flex;
  flex: 1;
  align-items: center;
  padding: 0 2px 0 199px;
  border-top: 1px solid #d9d9d9;
  background: #f1f1f1;
  font-family: 'Liberation Sans', sans-serif;
}
.doc-icon {
  width: 8px;
  height: 8px;
  margin-right: 3px;
}
.tab-close {
  margin-left: auto;
}
.tab-close svg {
  width: 7px;
  height: 7px;
}
.new-tab {
  width: 15px;
  margin-left: 2px;
  background: #b9b9b9;
}
.new-tab svg {
  width: 8px;
  height: 8px;
}
.account {
  display: flex;
  align-items: center;
  gap: 8px;
  padding: 0 8px 0 4px;
}
.account svg {
  width: 9px;
  height: 9px;
}
.help {
  width: 8px;
  height: 8px;
  border-radius: 50%;
  background: #555;
  color: #fff;
  font-weight: 700;
}
.avatar {
  margin-left: 3px;
}
.avatar svg {
  width: 12px;
  height: 12px;
}

.ribbon {
  display: flex;
  flex: none;
  height: 45px;
  padding-left: 5px;
  background: #f1f1f1;
}
.workspace {
  flex: none;
  width: 58px;
  height: 32px;
  margin-top: 6px;
  border: 1px solid #dcdcdc;
  border-radius: 2px;
  font-weight: 700;
}
.ribbon-main {
  margin-left: 4px;
}
.tabs {
  display: flex;
  gap: 22px;
  height: 12px;
  padding-left: 10px;
}
.tabs button {
  border-bottom: 1px solid transparent;
  white-space: nowrap;
}
.tabs .active {
  margin: 0 -5px;
  padding: 0 5px;
  border-bottom: 1px solid #0a91d9;
  color: #0a91d9;
  font-weight: 700;
}
.groups {
  display: flex;
}
.group {
  display: flex;
  flex-direction: column;
  align-items: stretch;
  height: 30px;
  padding: 0 2px;
  border-right: 1px solid #dcdcdc;
}
.group:last-child {
  border-right: 0;
}
.tools {
  display: grid;
  grid-auto-flow: column;
  grid-auto-columns: minmax(0, 1fr);
  height: 21px;
}
.tools svg {
  width: 18px;
  height: 18px;
}
.tools .big {
  width: 20px;
  height: 20px;
}
.group-label {
  white-space: nowrap;
}
.group-label .caret {
  margin-left: 1px;
}

.viewport {
  position: relative;
  display: flex;
  flex: 1;
  flex-direction: column;
  justify-content: space-between;
  min-height: 0;
  overflow: hidden;
}
.scene {
  position: absolute;
  inset: 0;
  width: 100%;
  height: 100%;
}
.cube-text {
  fill: #777;
  font-size: 5px;
  text-anchor: middle;
}
.z-axis {
  fill: #6a6aee;
  font-size: 7px;
}
.y-axis {
  fill: #63e663;
  font-size: 7px;
}
.browser,
.bottom {
  position: relative;
}
.browser {
  width: 157px;
  padding: 2px 0 0 1px;
}
.panel-head {
  display: flex;
  align-items: center;
  height: 13px;
  padding: 0 5px 0 2px;
  border-right: 1px solid #d5d5d5;
  border-bottom: 1px solid #d5d5d5;
  background: #f2f2f2;
  color: #666;
}
.collapse {
  width: 11px;
  font: 6px/8px 'DejaVu Sans', sans-serif;
  color: #222;
}
.dot {
  width: 5px;
  height: 5px;
  margin-left: auto;
  border: 1px solid #222;
  border-radius: 50%;
  background: #555;
}
.dot.plus {
  border-width: 2px;
  background: #eee;
}
.tree {
  display: grid;
  grid-auto-rows: 1fr;
  height: 200px;
  margin-top: 1px;
}
.row {
  display: flex;
  align-items: center;
  color: #333;
}
.ico {
  width: 9px;
  height: 9px;
}
.root {
  padding-left: 8px;
}
.root .eye {
  margin: 0 3px 0 4px;
}
.root-label {
  display: flex;
  align-items: center;
  gap: 7px;
  width: 109px;
  height: 9px;
  background: #8d8d8d;
  color: #fff;
  white-space: nowrap;
}
.root-label b {
  overflow: hidden;
}
.root .target {
  margin-left: 1px;
}
.level-1 {
  padding-left: 17px;
}
.level-1 > .eye {
  margin: 0 -1px 0 4px;
}
.level-2 {
  padding-left: 39px;
}
.node {
  display: flex;
  align-items: center;
  gap: 5px;
  height: 11px;
  margin-left: 3px;
  padding-right: 4px;
  background: #f2f2f2;
  white-space: nowrap;
}
.level-1 > .eye + .node {
  gap: 7px;
}
.level-2 .node {
  gap: 7px;
  padding-left: 1px;
}
.picked .node {
  background: #0a91d9;
  color: #fff;
}

.bottom {
  display: flex;
  align-items: center;
  padding: 0 0 3px 1px;
}
.comments {
  width: 156px;
  padding-left: 13px;
}
.navbar {
  display: flex;
  align-items: center;
  gap: 4px;
  height: 12px;
  margin-left: 153px;
  padding: 0 1px;
  background: #f1f1f1;
}
.navbar svg {
  width: 9px;
  height: 9px;
}
.navbar .caret {
  margin-left: 0;
}

.timeline {
  flex: none;
  height: 23px;
  background: #f1f1f1;
}
.scroll {
  height: 4px;
  padding-left: 1px;
  border-top: 1px solid #dcdcdc;
}
.thumb {
  width: 55%;
  height: 3px;
  background: #c1c1c1;
}
.track {
  display: flex;
  height: 19px;
}
.playback {
  display: flex;
  align-items: center;
  gap: 4px;
  width: 73px;
  padding: 4px 0 0 3px;
}
.playback svg {
  width: 9px;
  height: 9px;
}
.features {
  display: flex;
  flex: 1;
}
.features li {
  display: flex;
  flex: 1;
  flex-direction: column;
  align-items: center;
  height: 17px;
  padding-top: 3px;
  border-bottom: 1px solid #bcbcbc;
}
.features li::after {
  width: 1px;
  height: 3px;
  background: #bcbcbc;
  content: '';
}
.features svg {
  width: 10px;
  height: 10px;
}
.settings {
  width: 22px;
  padding-top: 4px;
}
.settings svg {
  width: 9px;
  height: 9px;
}
</style>
